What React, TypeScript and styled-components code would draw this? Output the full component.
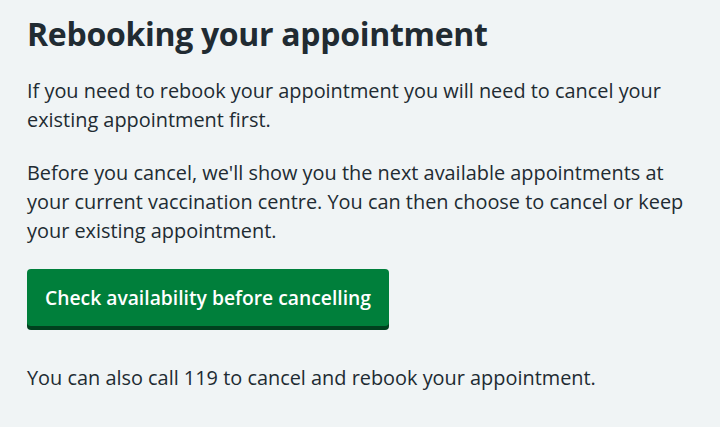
import React from "react";
import styled, { createGlobalStyle } from "styled-components";

const Global = createGlobalStyle`
  html, body { margin: 0; padding: 0; background: #f0f4f5; }
  body { font-family: "Open Sans", "Noto Sans", sans-serif; color: #212b32; -webkit-font-smoothing: antialiased; }
`;

const Page = styled.main`
  padding: 14px 27px 0;
  display: flex;
  flex-direction: column;
  align-items: flex-start;
`;

const Heading = styled.h1`
  margin: 0 0 22px;
  font-size: 32px;
  line-height: 40px;
  font-weight: 700;
  letter-spacing: -0.3px;
`;

const Para = styled.p`
  margin: 0 0 24px;
  font-size: 19.9px;
  line-height: 29px;
  font-weight: 400;
`;

const Button = styled.button`
  margin: 0 0 37px;
  height: 57px;
  padding: 0 18px;
  background: #007f3b;
  color: #fff;
  border: 0;
  border-radius: 4px;
  box-shadow: 0 4px 0 #00401e;
  font-family: inherit;
  font-size: 19.3px;
  font-weight: 600;
  cursor: pointer;
`;

export default function App() {
  return (
    <>
      <Global />
      <Page>
        <Heading>Rebooking your appointment</Heading>
        <Para>
          If you need to rebook your appointment you will need to cancel your
          <br />
          existing appointment first.
        </Para>
        <Para>
          Before you cancel, we'll show you the next available appointments at
          <br />
          your current vaccination centre. You can then choose to cancel or keep
          <br />
          your existing appointment.
        </Para>
        <Button>Check availability before cancelling</Button>
        <Para>You can also call 119 to cancel and rebook your appointment.</Para>
      </Page>
    </>
  );
}
